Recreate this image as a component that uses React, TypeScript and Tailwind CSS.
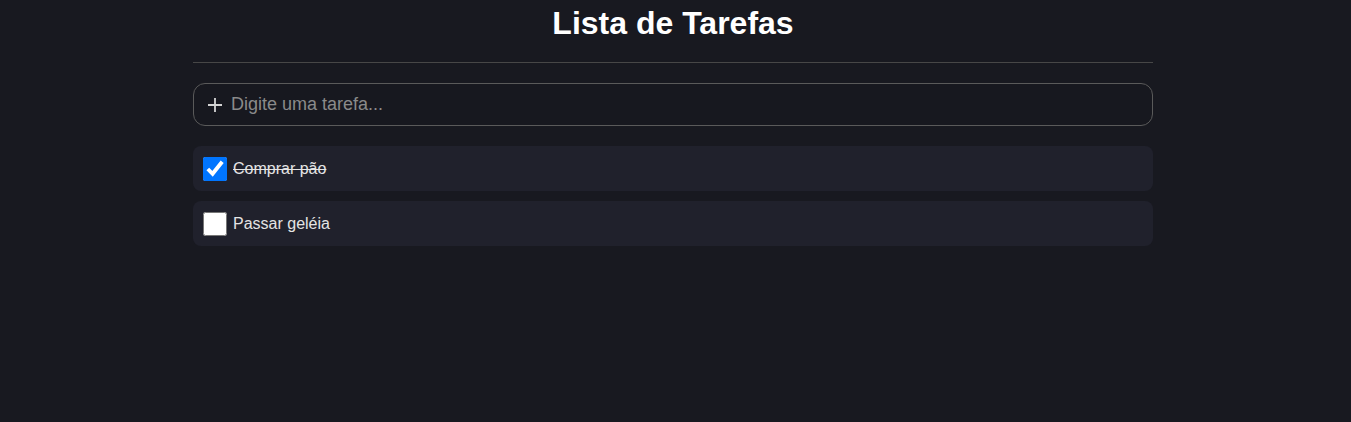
import { useState } from 'react'

type Task = { id: number; text: string; done: boolean }

const INITIAL: Task[] = [
  { id: 1, text: 'Comprar pão', done: true },
  { id: 2, text: 'Passar geléia', done: false },
]

export default function App() {
  const [tasks, setTasks] = useState<Task[]>(INITIAL)
  const [draft, setDraft] = useState('')

  const toggle = (id: number) =>
    setTasks((prev) => prev.map((t) => (t.id === id ? { ...t, done: !t.done } : t)))

  return (
    <div
      className="min-h-screen bg-[#181920] pr-[5px] text-white"
      style={{ fontFamily: '"Liberation Sans", Arial, sans-serif' }}
    >
      <div className="mx-auto w-[960px] pt-[5px]">
        <h1 className="text-center text-[32px] font-bold leading-[37px]">Lista de Tarefas</h1>
        <div className="mt-[20px] h-px bg-[#474747]" />

        <div className="mt-[20px] flex h-[43px] items-center gap-[8px] rounded-[12px] border border-[#5a5a5a] bg-[#17181f] px-[13px]">
          <svg width="16" height="16" viewBox="0 0 16 16" aria-hidden className="shrink-0">
            <path d="M8 1v14M1 8h14" stroke="#d4d4d4" strokeWidth="1.8" />
          </svg>
          <input
            value={draft}
            onChange={(e) => setDraft(e.target.value)}
            placeholder="Digite uma tarefa..."
            className="w-full bg-transparent text-[18px] text-white outline-none placeholder:text-[#8a8a8a]"
          />
        </div>

        <ul className="mt-[20px] flex flex-col gap-[10px]">
          {tasks.map((t) => (
            <li
              key={t.id}
              className="flex h-[45px] items-center gap-[6px] rounded-[8px] bg-[#20212c] px-[10px]"
            >
              <input
                type="checkbox"
                checked={t.done}
                onChange={() => toggle(t.id)}
                className="m-0 h-[24px] w-[24px] shrink-0"
              />
              <span className={`text-[16px] text-[#e4e4e4] ${t.done ? 'line-through' : ''}`}>{t.text}</span>
            </li>
          ))}
        </ul>
      </div>
    </div>
  )
}
